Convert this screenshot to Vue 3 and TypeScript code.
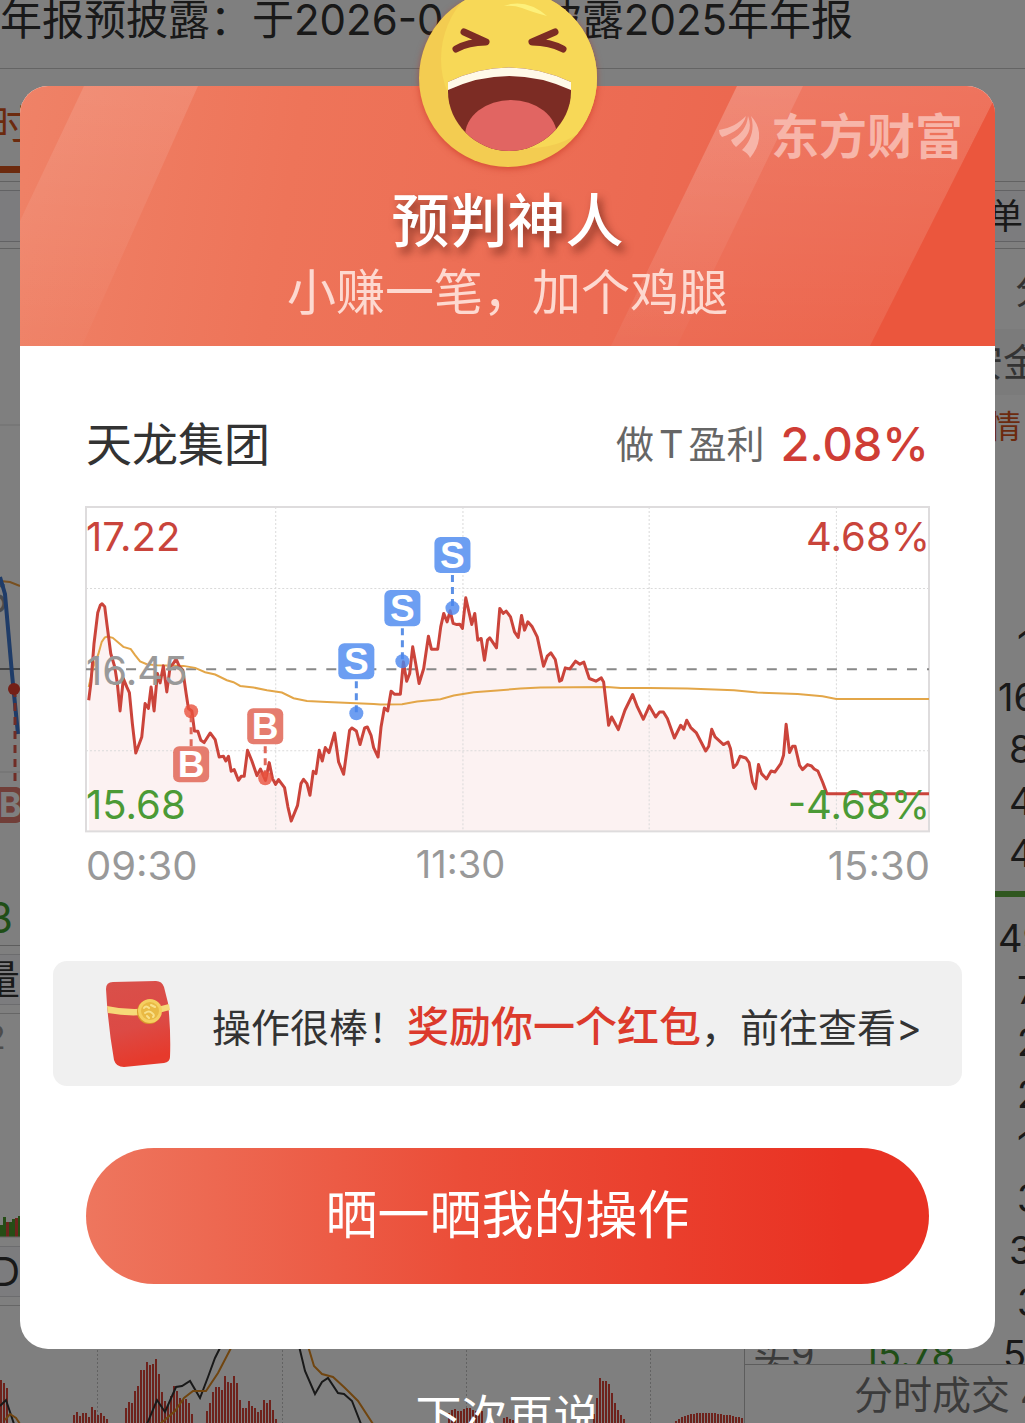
<script setup lang="ts">
interface Stretch {
  start: number
  points: string
}

interface Marker {
  kind: 'B' | 'S'
  x: number
  dotY: number
  boxY: number
}

// Samples are stored in thirds of a chart unit, relative to each stretch's start.
function trace(stretches: Stretch[]): string {
  return stretches
    .flatMap(({ start, points }) =>
      points.split(' ').map((pair) => {
        const [x, y] = pair.split(',').map(Number)
        return `${((x + start) / 3).toFixed(1)},${((y - 21) / 3).toFixed(1)}`
      }),
    )
    .join(' ')
}

const price = trace([
  {
    start: -18,
    points:
      '26,600 33,545 42,430 53,338 61,315 66,311 74,320 81,375 92,460 104,500 112,550 120,632 130,535 140,560 148,577 157,670 167,758 185,710 195,610 205,625 213,560 222,632 232,520 240,548 250,497 260,575 270,500 278,492 288,477 297,497 308,510 318,580 325,625 335,632 343,692 353,693 362,720 372,727 390,698 405,718 417,770 430,768 437,782 445,768 453,813 462,808 475,840 483,828 492,828 502,750 515,782 530,826 541,806 556,840 567,787 577,835 586,852 595,838 613,862 623,920 633,962 652,915 662,850 670,837 680,850 689,885 699,813 707,820 717,750 726,782 735,742 746,757 763,698 775,785 790,822 808,690 815,683 828,692 839,733 853,683 861,680 872,705 880,742',
  },
  {
    start: 822,
    points:
      '53,770 62,680 72,623 82,632 92,573 102,582 120,582 129,485 139,543 148,520 157,440 166,490 176,550 190,505 204,408 213,447 232,447 241,380 250,340 260,365 269,332 278,370 287,373 298,372 306,385 316,293 325,333 334,373 343,340 352,420 362,415 372,480 381,420 388,413 396,425 408,443 418,325 428,340 437,333 450,350 462,395 473,412 483,346 492,390 502,365 515,380 530,410 549,498 560,468 571,458 584,478 597,543 603,540 614,503 628,506 645,483 658,492 670,486 686,535 706,543 722,533 729,545 744,675 753,650 773,688 793,630 816,583 830,620 848,657',
  },
  {
    start: 1662,
    points:
      '26,617 45,650 57,635 68,635 80,655 101,713 120,675 129,687 138,660 150,682 167,698 195,752 204,738 213,687 223,710 248,733 262,725 269,745 278,802 288,792 298,768 315,773 325,787 335,845 344,865 353,793 362,820 377,836 391,812 402,815 420,790 428,765 436,672 446,757 455,738 463,738 476,795 485,808 500,793 512,797 520,806 531,812 545,845 558,880 864,880',
  },
])

const average = trace([
  {
    start: -18,
    points:
      '26,560 40,500 55,462 65,425 74,412 82,409 98,413 130,440 152,447 165,465 180,484 200,492 230,495 310,497 345,503 375,516 405,523 440,540 460,546 480,557 520,562 560,570 605,577 640,594 680,602 740,605 880,611',
  },
  { start: 822, points: '60,613 125,612 170,604 240,597 280,586 340,576 410,571 480,565 540,562 740,560 780,563' },
  { start: 1662, points: '26,563 140,565 280,570 350,577 470,581 545,588 586,596 864,596' },
])

const priceArea = `3,324 ${price} 842,324`

const markers: Marker[] = [
  { kind: 'B', x: 105, dotY: 204, boxY: 239 },
  { kind: 'B', x: 179, dotY: 271, boxY: 201 },
  { kind: 'S', x: 270, dotY: 206, boxY: 136 },
  { kind: 'S', x: 316, dotY: 154, boxY: 83 },
  { kind: 'S', x: 366, dotY: 101, boxY: 30 },
]

const macdGroups = [
  { x: 0, tops: [74, 77, 82] },
  { x: 73, tops: [109, 106, 110, 107, 107, 111, 101, 104, 109, 107, 110, 113] },
  {
    x: 125,
    tops: [102, 96, 97, 85, 80, 64, 64, 56, 59, 58, 53, 68, 86, 95, 99, 90, 80, 85, 92, 94, 93, 97, 108],
  },
  {
    x: 206,
    tops: [105, 97, 86, 81, 81, 84, 70, 76, 77, 70, 77, 94, 102, 102, 95, 100, 102, 106, 104, 94, 97, 94, 104, 113],
  },
  { x: 448, tops: [107, 104, 103, 105, 105, 103, 102, 102, 104, 105, 106, 105] },
  { x: 503, tops: [112, 111, 113, 114] },
  { x: 593, tops: [108, 92, 72, 75, 75, 78, 87, 97, 104, 109, 113] },
  {
    x: 675,
    tops: [115, 113, 111, 110, 109, 108, 108, 107, 107, 107, 107, 107, 107, 107, 108, 108, 109, 109, 109, 110, 111, 111, 112],
  },
]

const macdBars = macdGroups.flatMap((g) => g.tops.map((top, i) => ({ x: g.x + i * 3, top })))

const volumeBars = [12, 20, 15, 15, 18, 19, 21, 27].map((h, i) => ({ x: i * 3, h, up: i % 3 === 2 }))

const upperOrders = [
  { text: '1', size: 'short' },
  { text: '16', size: 'long' },
  { text: '8', size: 'mid' },
  { text: '4', size: 'mid' },
  { text: '4', size: 'mid' },
]

const lowerOrders = [
  { text: '49', size: 'long' },
  { text: '7', size: 'short' },
  { text: '2', size: 'short' },
  { text: '2', size: 'short' },
  { text: '1', size: 'short' },
  { text: '3', size: 'short' },
  { text: '3', size: 'mid' },
  { text: '3', size: 'short' },
]
</script>

<template>
  <div class="screen">
    <main class="quote">
      <p class="notice">年报预披露：于2026-04-25披露2025年年报</p>
      <nav class="tabs"><a class="tab" href="#minute">时</a></nav>
      <div class="toolbar"><span>单</span></div>
      <div class="columns">
        <section class="left">
          <svg class="minute" viewBox="0 0 744 696" preserveAspectRatio="xMinYMin slice">
            <path d="M0 176H744M0 523H744" stroke="#ddd" />
            <path d="M0 420H744" stroke="#888" stroke-width="2" />
            <text x="-16" y="364" font-size="40" fill="#999">5</text>
            <polyline points="0,332 10,333 20,337" fill="none" stroke="#f0a040" stroke-width="2" />
            <polyline points="0,328 5,345 12,425 18,485" fill="none" stroke="#3f78d0" stroke-width="4" />
            <path d="M15 440V540" stroke="#e05a4d" stroke-width="3" stroke-dasharray="8 6" />
            <circle cx="14" cy="440" r="6" fill="#e8402f" />
            <rect x="-14" y="538" width="36" height="36" rx="6" fill="#e27d70" />
            <text x="-1" y="568" font-size="34" font-weight="700" fill="#fff">B</text>
            <text x="-13" y="684" font-size="42" fill="#3f9d2f">3</text>
          </svg>
          <h3 class="strip"><span>量</span></h3>
          <svg class="volume" viewBox="0 0 744 232" preserveAspectRatio="xMinYMin slice">
            <text x="-14" y="35" font-size="32" fill="#999">2</text>
            <rect v-for="b in volumeBars" :key="b.x" :x="b.x" :y="223 - b.h" width="3" :height="b.h" :fill="b.up ? '#d84a3a' : '#4c9a2c'" />
            <path d="M0 223H744" stroke="#ccc" />
          </svg>
          <h3 class="strip"><span>D</span></h3>
          <svg class="macd" viewBox="0 0 744 118" preserveAspectRatio="xMinYMin slice">
            <path d="M97.500 0V118M282.500 0V118M466.500 0V118M650.500 0V118" stroke="#c4c4c4" stroke-dasharray="2 2" />
            <rect v-for="b in macdBars" :key="b.x" :x="b.x" :y="b.top" width="2" :height="118 - b.top" fill="#dc4438" />
            <g fill="none" stroke-width="2">
              <polyline points="0,100 6,94 10,106 14,118" stroke="#333" />
              <polyline points="147,118 157,94 165,106 176,81 182,80 190,75 200,92 208,71 215,52 222,38" stroke="#333" />
              <polyline points="299,40 305,65 315,88 322,76 328,72 338,87 344,88 352,95 361,118" stroke="#333" />
              <polyline points="5,114 10,108 16,112 20,118" stroke="#e08a20" />
              <polyline points="160,118 175,105 184,92 193,85 206,85 218,67 231,42" stroke="#e08a20" />
              <polyline points="308,40 314,60 322,68 333,71 345,82 358,95 373,118" stroke="#e08a20" />
            </g>
          </svg>
        </section>
        <aside class="right">
          <p class="side-tab">分</p>
          <p class="side-band">安金</p>
          <p class="side-hot">情</p>
          <ul class="orders upper">
            <li v-for="(o, i) in upperOrders" :key="i" :class="o.size">{{ o.text }}</li>
          </ul>
          <div class="balance"></div>
          <ul class="orders lower">
            <li v-for="(o, i) in lowerOrders" :key="i" :class="o.size">{{ o.text }}</li>
            <li class="bid"><span class="level">买9</span><span class="bid-price">15.78</span><span>5</span></li>
          </ul>
          <p class="deals"><span>分时成交</span><span>4</span></p>
        </aside>
      </div>
    </main>

    <div class="overlay">
      <section class="dialog" role="dialog" aria-labelledby="dialog-title">
        <header class="hero">
          <svg class="stripes" viewBox="0 0 975 260" preserveAspectRatio="none" aria-hidden="true">
            <defs>
              <linearGradient id="fade" x1="0" y1="0" x2="0" y2="1">
                <stop offset="0" stop-color="#fff" stop-opacity=".12" />
                <stop offset="1" stop-color="#fff" stop-opacity=".02" />
              </linearGradient>
            </defs>
            <polygon points="64,0 178,0 62,260 0,260 0,135" fill="url(#fade)" />
            <polygon points="717,0 975,0 975,12 850,260 591,260" fill="url(#fade)" />
            <polygon points="717,0 783,0 657,260 591,260" fill="url(#fade)" />
            <polygon points="975,12 975,260 850,260" fill="#eb563d" />
          </svg>
          <div class="brand">
            <svg viewBox="0 0 40 44" aria-hidden="true">
              <path d="M0 15C12 13 20 8 27 1C24 12 15 18 3 22Q0 19 0 15Z" />
              <path d="M12 25C22 20 28 12 29 1C34 14 29 22 17 32Q14 30 12 25Z" />
              <path d="M23 35C32 26 36 14 32 1C44 14 42 30 31 43Q29 38 23 35Z" />
            </svg>
            <span>东方财富</span>
          </div>
          <h1 id="dialog-title">预判神人</h1>
          <p>小赚一笔，加个鸡腿</p>
          <svg class="emoji" viewBox="0 0 180 180" aria-hidden="true">
            <defs>
              <clipPath id="face"><circle cx="90" cy="90" r="89" /></clipPath>
              <clipPath id="mouth"><path d="M30 94Q90 65 153 94V104C153 134 125 163 91 163C57 163 30 134 30 104Z" /></clipPath>
            </defs>
            <circle cx="90" cy="90" r="89" fill="#f3cc51" />
            <circle cx="112" cy="71" r="89" fill="#f7d857" clip-path="url(#face)" />
            <path d="M86 18Q108 10 129 28Q114 24 104 20Q96 17 86 18Z" fill="#fdf07a" />
            <g fill="none" stroke="#7c2c24" stroke-width="7" stroke-linecap="round" stroke-linejoin="round">
              <path d="M46 44L68 54Q50 54 38 61" />
              <path d="M137 44L114 54Q132 54 145 61" />
            </g>
            <g clip-path="url(#mouth)">
              <rect x="28" y="70" width="128" height="100" fill="#7c2c24" />
              <ellipse cx="93" cy="148" rx="46" ry="36" fill="#e16562" />
              <path d="M30 102Q91 74 153 102V70H30Z" fill="#fff9e8" />
            </g>
          </svg>
        </header>

        <div class="body">
          <div class="summary">
            <h2>天龙集团</h2>
            <p><span class="caption">做<i>T</i>盈利</span><strong>2.08%</strong></p>
          </div>

          <svg class="chart" viewBox="0 0 842 392" role="img" aria-label="天龙集团">
            <polygon :points="priceArea" fill="#fcf2f2" />
            <g fill="none" stroke="#dadada" stroke-dasharray="2 2">
              <path d="M189.500 0V324M376.500 0V324M562.500 0V324M749.500 0V324M0 81.500H842M0 243.500H842" />
            </g>
            <rect x="0" y="0" width="842" height="324" fill="none" stroke="#dedcdd" stroke-width="2" />
            <path d="M0 162H842" stroke="#888" stroke-width="2" stroke-dasharray="10 10" />
            <polyline :points="average" fill="none" stroke="#e3a648" stroke-width="2" />
            <polyline :points="price" fill="none" stroke="#cb443b" stroke-width="3" stroke-linejoin="round" />
            <g v-for="m in markers" :key="m.x" :class="m.kind === 'B' ? 'buy' : 'sell'">
              <path :d="`M${m.x} ${m.boxY > m.dotY ? m.boxY : m.boxY + 38}V${m.dotY}`" />
              <circle :cx="m.x" :cy="m.dotY" r="7" />
              <rect :x="m.x - 18" :y="m.boxY" width="36" height="36" rx="6" />
              <text :x="m.x" :y="m.boxY + 31" text-anchor="middle">{{ m.kind }}</text>
            </g>
            <g class="scale">
              <text x="0" y="44" class="up">17.22</text>
              <text x="0" y="178">16.45</text>
              <text x="0" y="312" class="down">15.68</text>
              <text x="843" y="44" text-anchor="end" class="up">4.68%</text>
              <text x="843" y="312" text-anchor="end" class="down">-4.68%</text>
              <text x="0" y="373">09:30</text>
              <text x="374" y="371" text-anchor="middle" class="noon">11:30</text>
              <text x="843" y="373" text-anchor="end">15:30</text>
            </g>
          </svg>

          <a class="reward" href="#reward">
            <svg viewBox="0 0 66 86" aria-hidden="true">
              <defs>
                <linearGradient id="packet" x1="0" y1="0" x2="0.200" y2="1">
                  <stop offset="0" stop-color="#d9504a" />
                  <stop offset=".6" stop-color="#dc4a45" />
                  <stop offset="1" stop-color="#e63a2c" />
                </linearGradient>
              </defs>
              <path d="M7 1L50 0Q56 0 58 6L62 22Q65 50 64 76Q64 81 58 82L18 86Q10 86 8 79Q2 45 0 8Q0 1 7 1Z" fill="url(#packet)" />
              <path d="M1 25Q32 32 63 23L64 29Q34 38 2 32Z" fill="#f6d878" />
              <circle cx="43" cy="31" r="12" fill="#d99a2c" />
              <circle cx="44" cy="30" r="12" fill="#f5cf60" />
              <circle cx="44" cy="30" r="9" fill="#e9b944" />
              <path d="M38 27Q40 24 43 27M45 24L49 26M39 32Q43 29 46 32Q49 34 47 36M41 35L43 37" fill="none" stroke="#f9e08a" stroke-width="2" stroke-linecap="round" />
            </svg>
            <span>操作很棒！<strong>奖励你一个红包</strong>，前往查看&gt;</span>
          </a>

          <button class="share" type="button">晒一晒我的操作</button>
        </div>
      </section>
      <button class="later" type="button">下次再说</button>
    </div>
  </div>
</template>

<style>
body {
  margin: 0;
}
</style>

<style scoped>
.screen {
  position: relative;
  height: 100vh;
  overflow: hidden;
  background: #fff;
  color: #333;
  font-family: Inter, "Noto Sans CJK SC", sans-serif;
}

h1,
h2,
h3,
p,
ul {
  margin: 0;
  padding: 0;
  font-weight: 400;
  list-style: none;
}

svg {
  display: block;
}

/* Quote page underneath */
.quote {
  display: flex;
  flex-direction: column;
  height: 100%;
}

.notice {
  height: 68px;
  border-bottom: 1px solid #c8c8c8;
  font-size: 42px;
  line-height: 40px;
  white-space: nowrap;
}

.tabs {
  height: 112px;
  border-bottom: 1px solid #c4c4c4;
}

.tab {
  display: flex;
  justify-content: flex-end;
  box-sizing: border-box;
  width: 30px;
  height: 104px;
  padding-top: 24px;
  border-bottom: 7px solid #d8541c;
  color: #d8541c;
  font-size: 40px;
  line-height: 64px;
  text-decoration: none;
}

.toolbar {
  display: flex;
  justify-content: flex-end;
  margin-top: 8px;
  border: solid #c4c4c8;
  border-width: 1px 0;
  background: #f8f9fc;
  font-size: 35px;
  line-height: 50px;
}

.toolbar span {
  width: 37px;
}

.columns {
  display: flex;
  flex: 1;
  min-height: 0;
  margin-top: 6px;
  border-top: 1px solid #c4c4c4;
}

.left {
  display: flex;
  flex: 1;
  flex-direction: column;
  min-width: 0;
}

.left svg {
  width: 100%;
}

.minute {
  height: 696px;
  border-bottom: 1px solid #bbb;
}

.strip {
  display: flex;
  height: 49px;
  margin: 8px 0;
  border: solid #d8d8dc;
  border-width: 1px 0;
  background: #f8f9fc;
  font-size: 40px;
  line-height: 49px;
}

.strip span {
  display: flex;
  justify-content: flex-end;
  width: 20px;
}

.volume {
  height: 224px;
  border-top: 1px solid #ccc;
}

.macd {
  flex: 1;
  border-top: 1px solid #ccc;
}

.right {
  display: flex;
  flex-direction: column;
  width: 280px;
  overflow: hidden;
  border-left: 1px solid #bbb;
}

.side-tab,
.side-band,
.side-hot {
  flex: none;
  margin-right: -16px;
  color: #666;
  font-size: 38px;
  line-height: 80px;
  text-align: right;
  white-space: nowrap;
}

.side-tab {
  margin-right: -28px;
}

.side-band {
  background: #f6f6f6;
  line-height: 66px;
}

.side-hot {
  margin-right: 4px;
  color: #d8541c;
  font-size: 32px;
  line-height: 64px;
}

.orders li {
  display: flex;
  height: 52px;
  font-size: 38px;
  line-height: 52px;
}

.upper {
  flex: none;
  margin-top: 160px;
}

.lower {
  height: 452px;
  overflow: hidden;
  flex: none;
}

.orders .long {
  padding-left: 253px;
}

.orders .mid {
  padding-left: 264px;
}

.orders .short {
  padding-left: 272px;
}

.balance {
  flex: none;
  height: 6px;
  margin: 12px 0 15px;
  background: #5fae3f;
}

.orders .bid {
  gap: 48px;
  padding-left: 8px;
  white-space: nowrap;
}

.bid .level {
  color: #777;
}

.bid-price {
  color: #3f9d2f;
}

.deals {
  display: flex;
  gap: 10px;
  flex: none;
  padding-left: 109px;
  border-top: 1px solid #bbb;
  color: #777;
  font-size: 39px;
  line-height: 60px;
  white-space: nowrap;
}

/* Result dialog */
.overlay {
  position: absolute;
  inset: 0;
  display: flex;
  flex-direction: column;
  padding: 86px 30px 0 20px;
  background: rgba(0, 0, 0, 0.5);
}

.dialog {
  flex: none;
  border-radius: 28px;
  background: #fff;
}

.hero {
  position: relative;
  padding: 100px 0 18px;
  border-radius: 28px 28px 0 0;
  background: linear-gradient(100deg, #ef8267 0%, #ee7459 28%, #ec6b53 60%, #ec5f46 100%);
  color: #fff;
  text-align: center;
}

.stripes {
  position: absolute;
  inset: 0;
  width: 100%;
  height: 100%;
  border-radius: 28px 28px 0 0;
}

.hero h1 {
  position: relative;
  font-size: 58px;
  font-weight: 500;
  line-height: 70px;
  text-shadow: 4px 6px 8px rgba(80, 20, 10, 0.6);
}

.hero p {
  position: relative;
  margin-top: 2px;
  color: #fdd9d0;
  font-size: 49px;
  line-height: 70px;
}

.brand {
  position: absolute;
  top: 16px;
  right: 32px;
  display: flex;
  align-items: center;
  gap: 12px;
  color: #f7b5a9;
  font-size: 48px;
  font-weight: 700;
  line-height: 70px;
}

.brand svg {
  width: 40px;
  height: 44px;
  fill: currentColor;
}

.emoji {
  position: absolute;
  top: -98px;
  left: 50%;
  width: 180px;
  height: 180px;
  margin-left: -90px;
  filter: drop-shadow(0 2px 3px rgba(190, 40, 20, 0.5));
}

.body {
  padding: 64px 66px 65px;
}

.summary {
  display: flex;
  align-items: center;
  justify-content: space-between;
  margin-bottom: 29px;
  line-height: 68px;
}

.summary h2 {
  font-size: 46px;
}

.summary p {
  display: flex;
  align-items: center;
  gap: 16px;
}

.caption {
  color: #666;
  font-size: 38px;
}

.caption i {
  margin: 0 5px;
  font-style: normal;
}

.summary strong {
  color: #cf3d35;
  font-size: 47px;
  font-weight: 500;
}

.chart {
  width: 100%;
  overflow: visible;
}

.scale {
  fill: #999;
  font-size: 40px;
}

.scale .up {
  fill: #c9443b;
}

.scale .down {
  fill: #4b9a36;
}

.scale .noon {
  font-size: 38px;
}

.buy {
  fill: #e57c6e;
}

.sell {
  fill: #6c9ef2;
}

.buy circle {
  fill: #e8503c;
  fill-opacity: 0.8;
}

.sell circle {
  fill: #4a86ee;
  fill-opacity: 0.8;
}

.buy path,
.sell path {
  stroke: #e0685a;
  stroke-width: 3;
  stroke-dasharray: 7 5;
}

.sell path {
  stroke: #5b90e6;
}

.buy text,
.sell text {
  fill: #fff;
  font: 700 37px "Liberation Sans", sans-serif;
}

.reward {
  display: flex;
  align-items: center;
  gap: 40px;
  height: 125px;
  margin: 62px -33px;
  padding-left: 53px;
  border-radius: 14px;
  background: #f0f0f0;
  color: #333;
  font-size: 39px;
  text-decoration: none;
  white-space: nowrap;
}

.reward svg {
  flex: none;
  width: 66px;
  height: 86px;
}

.reward strong {
  color: #dc3a2c;
  font-size: 42px;
  font-weight: 500;
}

.share {
  display: block;
  width: 100%;
  height: 136px;
  padding: 0;
  border: 0;
  border-radius: 68px;
  background: linear-gradient(90deg, #ee765e, #eb4d38 45%, #e93223 90%);
  color: #fff;
  font: 52px/136px Inter, "Noto Sans CJK SC", sans-serif;
}

.later {
  align-self: center;
  margin-top: 37px;
  padding: 0;
  border: 0;
  background: none;
  color: #fff;
  font: 46px/60px Inter, "Noto Sans CJK SC", sans-serif;
}
</style>
